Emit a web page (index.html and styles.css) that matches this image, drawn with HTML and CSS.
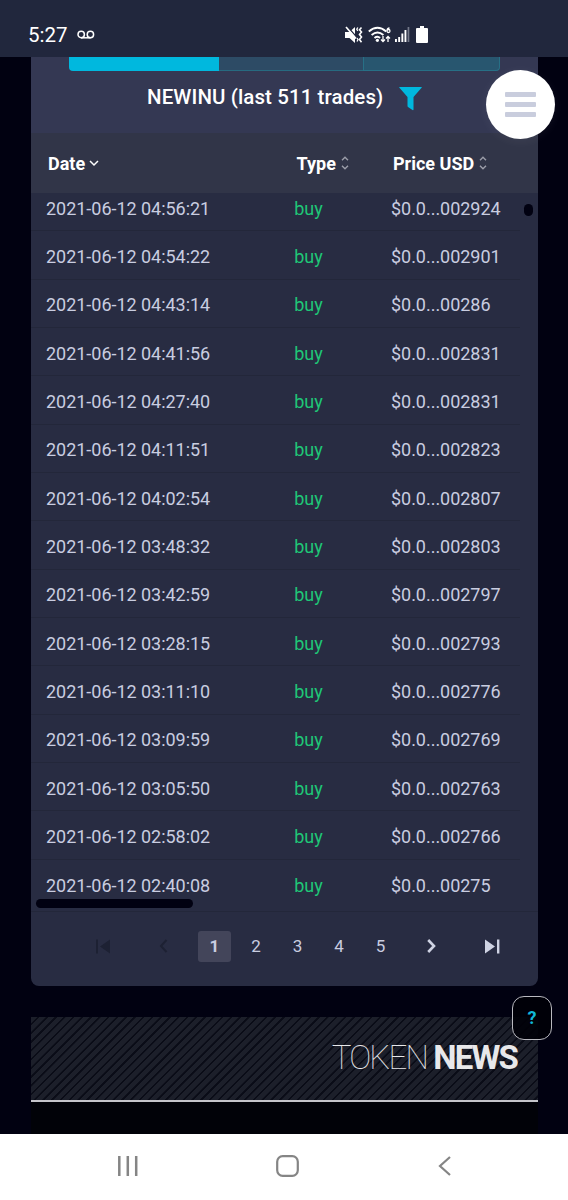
FILE: index.html
```html
<!DOCTYPE html>
<html lang="en">
<head>
	<meta charset="UTF-8">
	<title>NEWINU trades</title>
	<link rel="stylesheet" href="styles.css">
</head>
<body>
	<div class="status">
		<span class="clock">5:27</span>
		<svg class="voicemail" width="18" height="10" viewBox="0 0 18 10"><g fill="none" stroke="#fff" stroke-width="1.5"><circle cx="4.2" cy="4.5" r="3.2"/><circle cx="13.4" cy="4.5" r="3.2"/><path d="M4 7.8h9.6"/></g></svg>
		<div class="status_right">
			<svg width="18" height="18" viewBox="0 0 18 18"><path d="M0 6h4.500L10 1v16l-5.500-5H0z" fill="#fff"/><path d="M1.800 0l11 12.500" stroke="#21273d" stroke-width="1.500"/><path d="M1 1l10 11.500" stroke="#fff" stroke-width="1.700"/><path d="M12.800 1.500l-1 1.800 1 1.500M12 12l1 1.500-1 2" fill="none" stroke="#fff" stroke-width="1.300"/><path d="M16.500 1.500l-2 2.200 2 2.300-2 2.500 2 2.500-2 2.500 2 2.700" fill="none" stroke="#fff" stroke-width="1.600"/></svg>
			<svg class="wifi" width="23" height="18" viewBox="0 0 23 18"><g fill="none" stroke="#fff" stroke-width="1.900"><path d="M.8 5.500q8.700-7.500 17.400 0M3.600 9q5.900-5.200 11.800 0M6.500 12q3-2.400 5.500 0"/></g><circle cx="9.400" cy="14.300" r="1.600" fill="#fff"/><path d="M21.500 2q-2.500.2-2.500 2.800M19 5a1.500 1.500 0 1 0 3 0a1.500 1.500 0 1 0-3 0M15 10v5.500M13 13.500l2 2 2-2M20 16v-5M18 12.500l2-2 2 2" fill="none" stroke="#fff" stroke-width="1.300"/></svg>
			<svg class="signal" width="15" height="17" viewBox="0 0 15 17"><path d="M0 13h1.900v3H0zM3.200 11h1.900v5H3.200zM6.400 7.500h1.900V16H6.400zM9.500 4h1.900v12H9.500z" fill="#fff"/><path d="M12.600 1h1.700v15h-1.700z" fill="#747889"/></svg>
			<svg class="battery" width="12" height="18" viewBox="0 0 12 18"><path d="M4 0h4v2h3q1 0 1 1v13q0 1-1 1H1q-1 0-1-1V3q0-1 1-1h3z" fill="#fff"/></svg>
		</div>
	</div>

	<div class="content">
		<div class="card">
			<div class="tabs"><span class="tab active"></span><span class="tab"></span><span class="tab last"></span></div>
			<div class="title">
				<h2>NEWINU (last 511 trades)</h2>
				<svg width="23" height="24" viewBox="0 0 23 24"><path d="M.5 0h22q.5 0 .3.600L14.500 10v12.500q0 1-1 .6L9 20q-.5-.4-.5-1v-9L.2.600Q0 0 .5 0z" fill="#00b8de"/></svg>
			</div>
			<div class="row head">
				<span>Date<svg class="down" width="10" height="7" viewBox="0 0 10 7"><path d="M1 1l4 4 4-4" fill="none" stroke="#fff" stroke-width="1.500"/></svg></span>
				<span>Type<svg class="sort" width="8" height="14" viewBox="0 0 8 14"><path d="M1 4.300l3-3 3 3M1 9.700l3 3 3-3" fill="none" stroke="#9b9da9" stroke-width="1.400"/></svg></span>
				<span>Price USD<svg class="sort" width="8" height="14" viewBox="0 0 8 14"><path d="M1 4.300l3-3 3 3M1 9.700l3 3 3-3" fill="none" stroke="#9b9da9" stroke-width="1.400"/></svg></span>
			</div>
			<div class="table">
				<div class="rows">
					<div class="row"><span>2021-06-12 04:56:21</span><span class="buy">buy</span><span>$0.0...002924</span></div>
					<div class="row"><span>2021-06-12 04:54:22</span><span class="buy">buy</span><span>$0.0...002901</span></div>
					<div class="row"><span>2021-06-12 04:43:14</span><span class="buy">buy</span><span>$0.0...00286</span></div>
					<div class="row"><span>2021-06-12 04:41:56</span><span class="buy">buy</span><span>$0.0...002831</span></div>
					<div class="row"><span>2021-06-12 04:27:40</span><span class="buy">buy</span><span>$0.0...002831</span></div>
					<div class="row"><span>2021-06-12 04:11:51</span><span class="buy">buy</span><span>$0.0...002823</span></div>
					<div class="row"><span>2021-06-12 04:02:54</span><span class="buy">buy</span><span>$0.0...002807</span></div>
					<div class="row"><span>2021-06-12 03:48:32</span><span class="buy">buy</span><span>$0.0...002803</span></div>
					<div class="row"><span>2021-06-12 03:42:59</span><span class="buy">buy</span><span>$0.0...002797</span></div>
					<div class="row"><span>2021-06-12 03:28:15</span><span class="buy">buy</span><span>$0.0...002793</span></div>
					<div class="row"><span>2021-06-12 03:11:10</span><span class="buy">buy</span><span>$0.0...002776</span></div>
					<div class="row"><span>2021-06-12 03:09:59</span><span class="buy">buy</span><span>$0.0...002769</span></div>
					<div class="row"><span>2021-06-12 03:05:50</span><span class="buy">buy</span><span>$0.0...002763</span></div>
					<div class="row"><span>2021-06-12 02:58:02</span><span class="buy">buy</span><span>$0.0...002766</span></div>
					<div class="row"><span>2021-06-12 02:40:08</span><span class="buy">buy</span><span>$0.0...00275</span></div>
				</div>
				<div class="scroll_y"></div>
				<div class="scroll_x"></div>
			</div>
			<div class="pager">
				<svg class="first" width="14" height="15" viewBox="0 0 14 15"><path d="M0 .5h2v14H0zM14 .5v14L4 7.500z" fill="#1d2133"/></svg>
				<svg class="prev" width="9" height="14" viewBox="0 0 9 14"><path d="M7.500 1L2 7l5.500 6" fill="none" stroke="#1d2133" stroke-width="2"/></svg>
				<a class="num current">1</a>
				<a class="num">2</a>
				<a class="num">3</a>
				<a class="num">4</a>
				<a class="num">5</a>
				<svg class="next" width="9" height="14" viewBox="0 0 9 14"><path d="M1.200 1L7 7l-5.800 6" fill="none" stroke="#cfd3e3" stroke-width="2.600"/></svg>
				<svg class="end" width="15" height="15" viewBox="0 0 15 15"><path d="M0 .5v14l10-7zM12 .5h2.400v14H12z" fill="#cfd3e3"/></svg>
			</div>
		</div>

		<div class="news">
			<h2>TOKEN <b>NEWS</b></h2>
		</div>
		<div class="news_body"></div>
	</div>

	<div class="nav">
		<svg width="20" height="20" viewBox="0 0 20 20"><path d="M1.300 0v20M9.800 0v20M18.200 0v20" stroke="#858585" stroke-width="2.500"/></svg>
		<svg width="24" height="22" viewBox="0 0 24 22"><rect x="1.200" y="1.200" width="20.600" height="19.600" rx="5.500" fill="none" stroke="#858585" stroke-width="2.200"/></svg>
		<svg width="13" height="20" viewBox="0 0 13 20"><path d="M12 1L2 10l10 9" fill="none" stroke="#858585" stroke-width="2.200"/></svg>
	</div>

	<div class="menu_btn"><i></i><i></i><i></i></div>
	<div class="help">?</div>
</body>
</html>
```
FILE: styles.css
```css
*{
	margin:0;
	padding:0;
	box-sizing:border-box;
}
body{
	width:568px;
	height:1200px;
	overflow:hidden;
	background:#010111;
	font-family:Roboto,"Liberation Sans",sans-serif;
	font-size:18px;
	color:#c9cde0;
}
svg{
	display:block;
	flex:none;
}
.status{
	height:57px;
	background:#21273d;
	display:flex;
	align-items:center;
	padding:12px 0 0 28px;
	color:#fff;
}
.clock{
	font-size:20.500px;
	width:48.500px;
}
.status_right{
	display:flex;
	align-items:center;
	margin-left:250.500px;
}
.wifi{
	margin-left:5px;
}
.signal{
	margin-left:4px;
}
.battery{
	margin-left:6px;
}
.content{
	height:1077px;
	padding:0 30.500px 0 31px;
	overflow:hidden;
}
.card{
	height:929px;
	background:#282c42;
	border-radius:0 0 8px 8px;
	overflow:hidden;
}
.tabs{
	height:14px;
	padding:0 0 0 38px;
	display:flex;
	background:#343853;
}
.tab{
	width:144px;
	background:#2d4b65;
	border-bottom:1px solid #276a80;
}
.tab.active{
	width:150px;
	background:#00b8de;
	border:0;
	border-radius:0 0 0 4px;
}
.tab.last{
	width:137px;
	background:#28566f;
	border:1px solid #277086;
	border-top:0;
	border-radius:0 0 4px 0;
}
.title{
	height:62px;
	background:#343853;
	display:flex;
	padding:12px 0 0 116px;
	color:#fff;
}
.title h2{
	width:252px;
	font-size:20.500px;
	line-height:28px;
	font-weight:500;
	letter-spacing:.1px;
	white-space:nowrap;
}
.title svg{
	margin-top:4px;
}
.row{
	display:grid;
	grid-template-columns:248.300px 96.700px 1fr;
	align-items:center;
	height:48.34px;
	padding:3px 0 0 15px;
	border-bottom:1px solid #23273a;
	letter-spacing:-.03px;
	white-space:nowrap;
}
.row.head{
	height:60px;
	grid-template-columns:248.500px 96.500px 1fr;
	padding:0 0 0 17px;
	background:#313548;
	border:0;
	color:#fff;
	font-weight:700;
	letter-spacing:0;
}
.head span{
	display:flex;
	align-items:center;
}
.down{
	margin-left:4px;
}
.sort{
	margin-left:5px;
}
.buy{
	color:#1fc777;
}
.table{
	position:relative;
	height:719px;
	overflow:hidden;
	border-bottom:1px solid #23273a;
}
.rows{
	width:489px;
	margin-top:-10px;
}
.rows .row:last-child{
	border:0;
}
.scroll_y{
	position:absolute;
	right:5px;
	top:11px;
	width:9px;
	height:12px;
	border-radius:5px;
	background:#010111;
}
.scroll_x{
	position:absolute;
	left:5px;
	bottom:3px;
	width:157px;
	height:9px;
	border-radius:5px;
	background:#010111;
}
.pager{
	height:74px;
	display:flex;
	align-items:center;
	padding:0 0 6px 65px;
	font-size:17px;
}
.prev{
	margin-left:49px;
}
.num{
	width:33px;
	height:31px;
	line-height:31px;
	margin-left:8.500px;
	text-align:center;
}
.num.current{
	margin-left:30px;
	background:#43455a;
	border-radius:3px;
	font-weight:700;
}
.next{
	margin-left:30px;
}
.end{
	margin-left:49px;
}
.news{
	height:85px;
	margin-top:31px;
	padding:21px 20.500px 0 0;
	border-bottom:2px solid #c5c5ca;
	background:repeating-linear-gradient(135deg,#1c1f2a 0,#1c1f2a 4.200px,#0a0c17 4.600px,#0a0c17 6px,#1c1f2a 6.200px);
	text-align:right;
	color:#e8e8ea;
}
.news h2{
	font-size:33px;
	line-height:40px;
	font-weight:100;
	letter-spacing:-1.800px;
}
.news b{
	font-weight:700;
}
.news_body{
	height:32px;
	background:#010208;
}
.nav{
	height:66px;
	background:#fff;
	display:flex;
	align-items:center;
	padding:0 0 2px 118px;
	gap:138px;
}
.menu_btn{
	position:absolute;
	left:486px;
	top:70px;
	width:69px;
	height:69px;
	border-radius:50%;
	background:#fff;
	box-shadow:0 2px 12px rgba(255,255,255,.06);
	display:flex;
	flex-direction:column;
	align-items:center;
	justify-content:center;
	gap:5px;
}
.menu_btn i{
	width:31px;
	height:5.300px;
	border-radius:1px;
	background:#c9cddd;
}
.help{
	position:absolute;
	left:512px;
	top:996px;
	width:40px;
	height:44px;
	border:1px solid #b9b9c0;
	border-radius:12px;
	background:rgba(0,0,8,.9);
	color:#10b8d8;
	font-size:18px;
	line-height:41px;
	font-weight:700;
	text-align:center;
}
```
